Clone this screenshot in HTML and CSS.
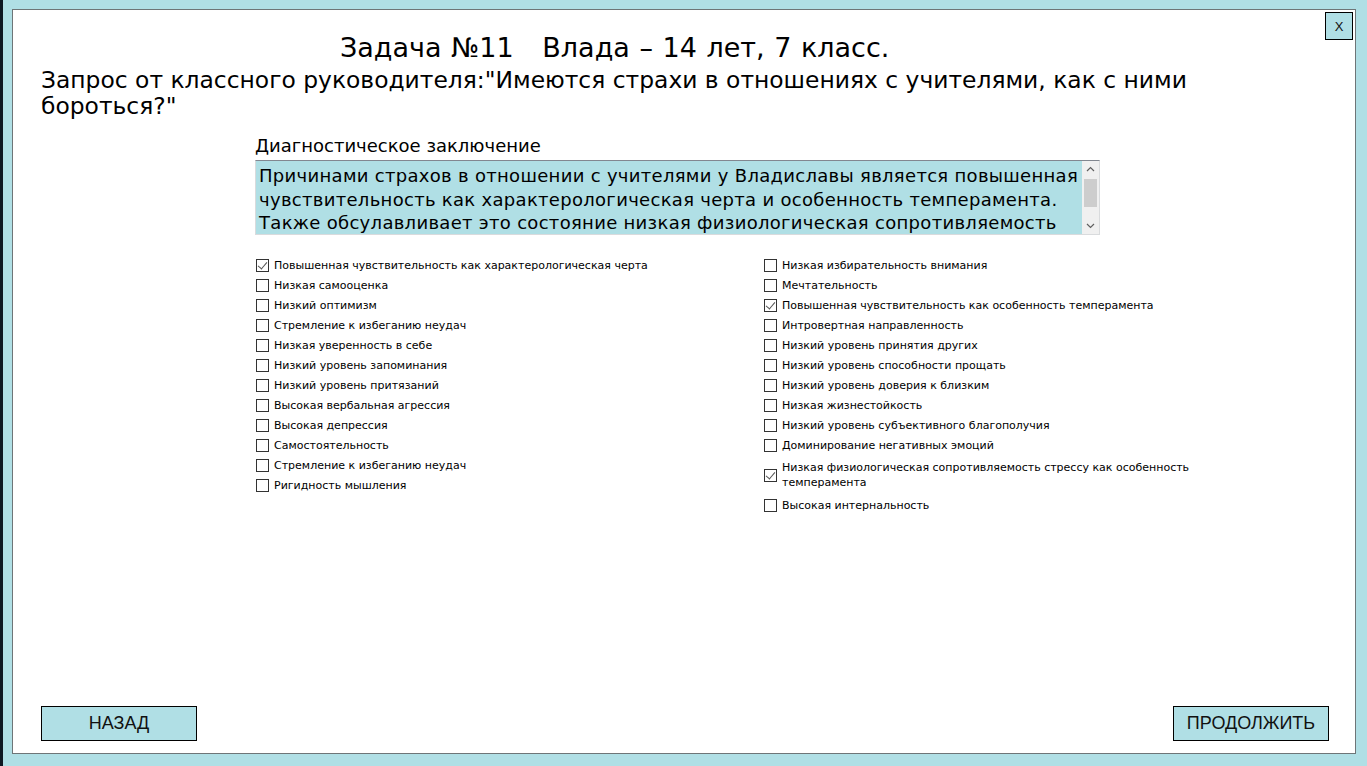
FILE: index.html
```html
<!DOCTYPE html>
<html lang="ru">
<head>
<meta charset="utf-8">
<title>Задача №11</title>
<link rel="stylesheet" href="styles.css">
</head>
<body>
<div class="strip"></div>
<div class="desk">
  <div class="panel">
    <button class="close">X</button>
    <h1 class="title">Задача №11&nbsp;&nbsp;&nbsp;Влада – 14 лет, 7 класс.</h1>
    <p class="request">Запрос от классного руководителя:"Имеются страхи в отношениях с учителями, как с ними бороться?"</p>
    <div class="section">
      <div class="label">Диагностическое заключение</div>
      <div class="conclusion">
        <div class="conclusion-text">Причинами страхов в отношении с учителями у Владиславы является повышенная чувствительность как характерологическая черта и особенность темперамента. Также обсулавливает это состояние низкая физиологическая сопротивляемость стрессу как особенность темперамента.</div>
        <div class="scrollbar">
          <svg class="arrow" width="17" height="17" viewBox="0 0 17 17"><path d="M5 10 L8.5 6.5 L12 10" fill="none" stroke="#606060" stroke-width="1.2"/></svg>
          <div class="track"><div class="thumb"></div></div>
          <svg class="arrow" width="17" height="17" viewBox="0 0 17 17"><path d="M5 7 L8.5 10.5 L12 7" fill="none" stroke="#606060" stroke-width="1.2"/></svg>
        </div>
      </div>
      <div class="options">
        <ul class="col col-left">
          <li class="opt"><span class="box checked"></span><span class="txt">Повышенная чувствительность как характерологическая черта</span></li>
          <li class="opt"><span class="box"></span><span class="txt">Низкая самооценка</span></li>
          <li class="opt"><span class="box"></span><span class="txt">Низкий оптимизм</span></li>
          <li class="opt"><span class="box"></span><span class="txt">Стремление к избеганию неудач</span></li>
          <li class="opt"><span class="box"></span><span class="txt">Низкая уверенность в себе</span></li>
          <li class="opt"><span class="box"></span><span class="txt">Низкий уровень запоминания</span></li>
          <li class="opt"><span class="box"></span><span class="txt">Низкий уровень притязаний</span></li>
          <li class="opt"><span class="box"></span><span class="txt">Высокая вербальная агрессия</span></li>
          <li class="opt"><span class="box"></span><span class="txt">Высокая депрессия</span></li>
          <li class="opt"><span class="box"></span><span class="txt">Самостоятельность</span></li>
          <li class="opt"><span class="box"></span><span class="txt">Стремление к избеганию неудач</span></li>
          <li class="opt"><span class="box"></span><span class="txt">Ригидность мышления</span></li>
        </ul>
        <ul class="col col-right">
          <li class="opt"><span class="box"></span><span class="txt">Низкая избирательность внимания</span></li>
          <li class="opt"><span class="box"></span><span class="txt">Мечтательность</span></li>
          <li class="opt"><span class="box checked"></span><span class="txt">Повышенная чувствительность как особенность темперамента</span></li>
          <li class="opt"><span class="box"></span><span class="txt">Интровертная направленность</span></li>
          <li class="opt"><span class="box"></span><span class="txt">Низкий уровень принятия других</span></li>
          <li class="opt"><span class="box"></span><span class="txt">Низкий уровень способности прощать</span></li>
          <li class="opt"><span class="box"></span><span class="txt">Низкий уровень доверия к близким</span></li>
          <li class="opt"><span class="box"></span><span class="txt">Низкая жизнестойкость</span></li>
          <li class="opt"><span class="box"></span><span class="txt">Низкий уровень субъективного благополучия</span></li>
          <li class="opt"><span class="box"></span><span class="txt">Доминирование негативных эмоций</span></li>
          <li class="opt opt-tall"><span class="box checked"></span><span class="txt">Низкая физиологическая сопротивляемость стрессу как особенность темперамента</span></li>
          <li class="opt"><span class="box"></span><span class="txt">Высокая интернальность</span></li>
        </ul>
      </div>
    </div>
    <div class="actions">
      <button class="btn">НАЗАД</button>
      <button class="btn">ПРОДОЛЖИТЬ</button>
    </div>
  </div>
</div>
</body>
</html>
```
FILE: styles.css
```css
* { box-sizing: border-box; }
html, body { margin: 0; padding: 0; height: 100%; }
body {
  display: flex;
  height: 766px;
  overflow: hidden;
  font-family: "DejaVu Sans", Verdana, sans-serif;
  color: #000;
}
.strip {
  width: 3px;
  flex: none;
  background: #0e1822;
}
.desk {
  flex: 1;
  background: #b0dfe5;
  padding: 9px 11px 12px 9px;
}
.panel {
  position: relative;
  height: 745px;
  background: #fff;
  border: 1px solid #6e7577;
  display: flex;
  flex-direction: column;
  padding: 0 26px 12px 28px;
}
.close {
  position: absolute;
  top: 2px;
  right: 2px;
  width: 28px;
  height: 28px;
  background: #b0dfe5;
  border: 1px solid #000;
  font-family: "Liberation Sans", Arial, sans-serif;
  font-size: 13px;
  padding: 0;
  color: #111;
}
.title {
  margin: 22px 0 0 299px;
  font-size: 27px;
  font-weight: normal;
  line-height: 32px;
  white-space: nowrap;
  word-spacing: 1px;
}
.request {
  margin: 3px 0 0;
  font-size: 23.4px;
  line-height: 26px;
  width: 1200px;
}
.section {
  margin: 16px 0 0 214px;
  width: 940px;
}
.label {
  font-size: 18px;
  line-height: 22px;
  margin-bottom: 3px;
}
.conclusion {
  display: flex;
  width: 845px;
  height: 75px;
  background: #b0dfe5;
  border-top: 1px solid #828790;
  border-left: 1px solid #d9dbdd;
  border-right: 1px solid #d9dbdd;
  border-bottom: 1px solid #d9dbdd;
  overflow: hidden;
}
.conclusion-text {
  flex: 1;
  font-size: 18px;
  line-height: 23.5px;
  letter-spacing: 0.3px;
  padding: 3px 0 0 3px;
  overflow: hidden;
}
.scrollbar {
  width: 17px;
  flex: none;
  background: #f0f0f0;
  display: flex;
  flex-direction: column;
}
.arrow { display: block; flex: none; }
.track { flex: 1; padding: 1px 1px; }
.thumb {
  height: 28px;
  background: #cdcdcd;
  margin: 0 1px;
}
.options {
  display: flex;
  margin-top: 20px;
}
.col {
  list-style: none;
  margin: 0;
  padding: 0;
}
.col-left { width: 508px; }
.col-right { width: 430px; }
.opt {
  display: flex;
  align-items: center;
  min-height: 20px;
  font-size: 11px;
  line-height: 15px;
}
.opt-tall { padding: 5px 0; }
.box {
  width: 13px;
  height: 13px;
  flex: none;
  border: 1px solid #333;
  background: #fff;
  margin: 0 5px 0 1px;
  position: relative;
}
.box.checked::after {
  content: "";
  position: absolute;
  left: 3px;
  top: 0px;
  width: 4px;
  height: 8px;
  border-right: 1.5px solid #555;
  border-bottom: 1.5px solid #555;
  transform: rotate(40deg);
}
.col-right .txt { max-width: 420px; }
.actions {
  margin-top: auto;
  display: flex;
  justify-content: space-between;
}
.btn {
  width: 156px;
  height: 35px;
  background: #b0dfe5;
  border: 1px solid #000;
  font-family: "Liberation Sans", Arial, sans-serif;
  font-size: 18px;
  color: #111;
  padding: 0;
}
```
